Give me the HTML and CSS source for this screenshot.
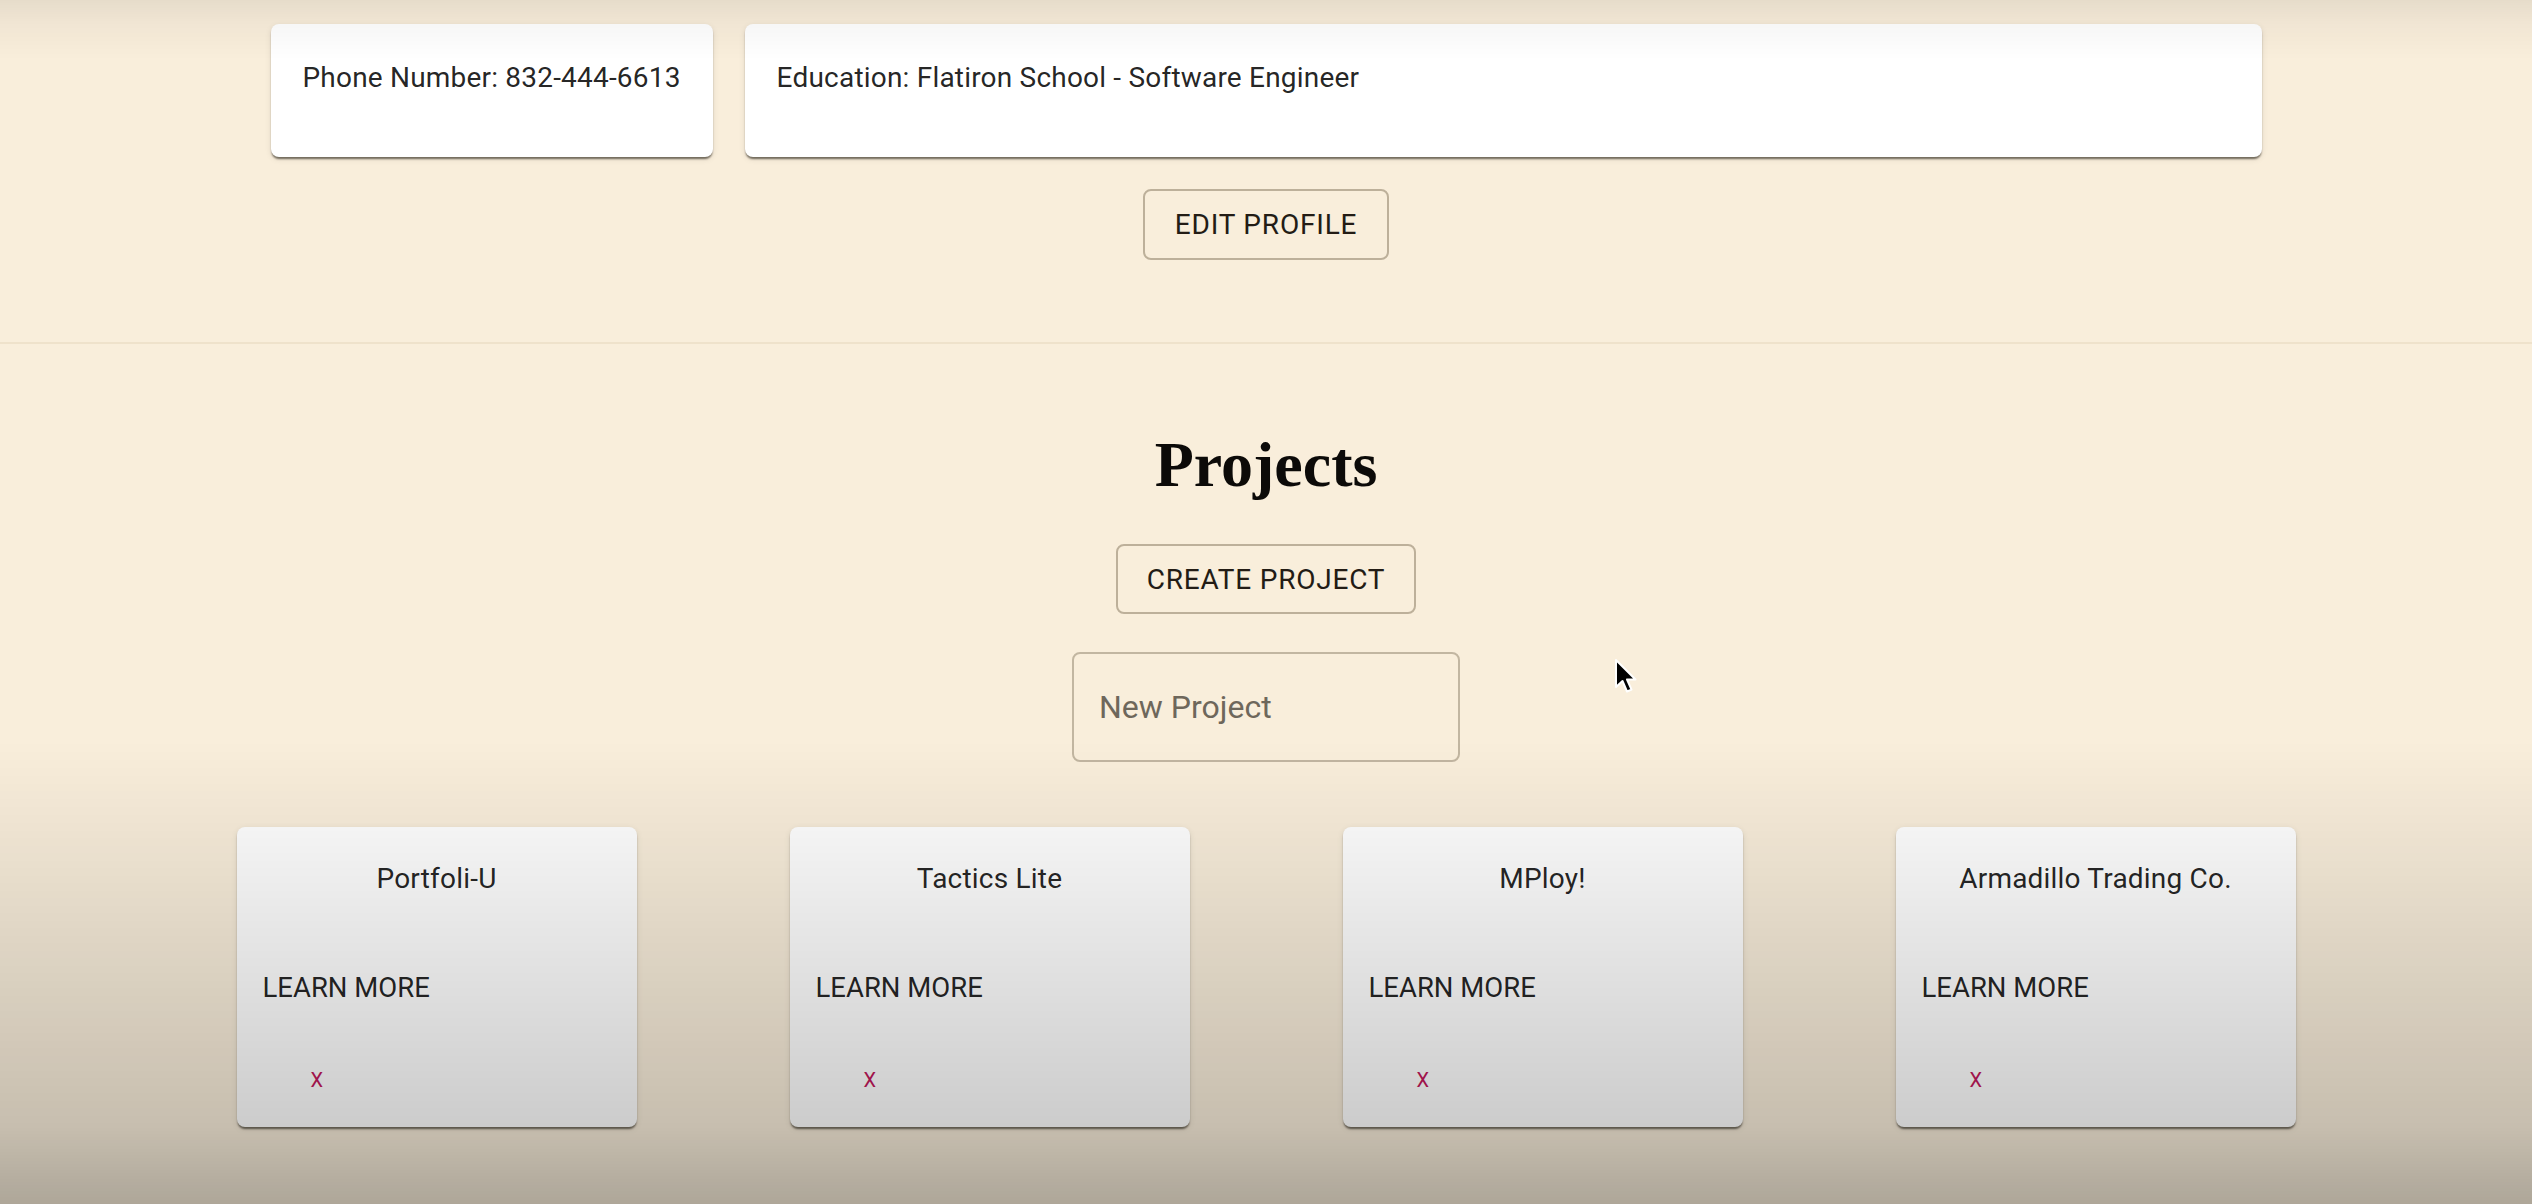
FILE: index.html
```html
<!DOCTYPE html>
<html lang="en">
<head>
<meta charset="utf-8">
<title>Profile - Projects</title>
<link rel="stylesheet" href="styles.css">
</head>
<body>
<main class="page">
  <section class="profile">
    <div class="info-row">
      <div class="info-card info-card--phone"><p class="info-text">Phone Number: 832-444-6613</p></div>
      <div class="info-card info-card--grow"><p class="info-text">Education: Flatiron School - Software Engineer</p></div>
    </div>
    <div class="center-row profile-actions">
      <button class="outline-btn" type="button">Edit Profile</button>
    </div>
  </section>

  <hr class="divider">

  <section class="projects">
    <h2 class="projects-title">Projects</h2>
    <div class="center-row create-row">
      <button class="outline-btn" type="button">Create Project</button>
    </div>
    <div class="center-row input-row">
      <input class="project-input" type="text" placeholder="New Project">
    </div>
    <div class="project-grid">
      <div class="project-card">
        <div class="project-name">Portfoli-U</div>
        <button class="learn-btn" type="button">Learn More</button>
        <button class="delete-btn" type="button">X</button>
      </div>
      <div class="project-card">
        <div class="project-name">Tactics Lite</div>
        <button class="learn-btn" type="button">Learn More</button>
        <button class="delete-btn" type="button">X</button>
      </div>
      <div class="project-card">
        <div class="project-name">MPloy!</div>
        <button class="learn-btn" type="button">Learn More</button>
        <button class="delete-btn" type="button">X</button>
      </div>
      <div class="project-card">
        <div class="project-name">Armadillo Trading Co.</div>
        <button class="learn-btn" type="button">Learn More</button>
        <button class="delete-btn" type="button">X</button>
      </div>
    </div>
  </section>
</main>

<div class="shade" aria-hidden="true"></div>

<svg class="cursor" width="24" height="36" viewBox="0 0 24 36" aria-hidden="true">
  <path d="M2 2 L2 29 L8.5 23 L13 33.5 L17.5 31.6 L13 21.5 L21.5 21.5 Z" fill="#000" stroke="#fff" stroke-width="2" stroke-linejoin="round"/>
</svg>
</body>
</html>
```

FILE: styles.css
```css
* {
  box-sizing: border-box;
}

html, body {
  margin: 0;
  padding: 0;
}

body {
  min-height: 1204px;
  background: #f9eedb;
  font-family: Roboto, "Liberation Sans", Arial, sans-serif;
  color: rgba(0, 0, 0, 0.87);
  overflow: hidden;
}

.page {
  min-height: 1204px;
}

.profile {
  padding-top: 24px;
}

.info-row {
  width: 1991px;
  margin: 0 auto;
  display: flex;
  gap: 32px;
}

.info-card {
  background: #ffffff;
  border-radius: 8px;
  padding: 34px 32px 59px 32px;
  box-shadow: 0 3px 2px -1px rgba(40, 35, 20, 0.55), 0 2px 2px 0 rgba(0, 0, 0, 0.12), 0 2px 6px 0 rgba(0, 0, 0, 0.1);
}

.info-card--grow {
  flex: 1;
}

.info-text {
  margin: 0;
  font-size: 28px;
  line-height: 40px;
  letter-spacing: 0.2px;
  white-space: nowrap;
}

.center-row {
  display: flex;
  justify-content: center;
}

.profile-actions {
  margin-top: 32px;
}

.outline-btn {
  height: 71px;
  padding: 0 30px;
  background: transparent;
  border: 2px solid #bdb09a;
  border-radius: 8px;
  font-family: Roboto, "Liberation Sans", Arial, sans-serif;
  font-size: 28px;
  font-weight: 400;
  letter-spacing: 0.8px;
  text-transform: uppercase;
  color: #231c15;
  cursor: pointer;
}

.divider {
  margin: 82px 0 0 0;
  border: 0;
  height: 2px;
  background: #efe2cb;
}

.projects-title {
  margin: 89px 0 0 0;
  text-align: center;
  font-family: "Liberation Serif", "Times New Roman", serif;
  font-weight: 700;
  font-size: 64px;
  line-height: 64px;
  color: #0c0a08;
}

.create-row {
  margin-top: 47px;
}

.create-row .outline-btn {
  height: 70px;
  width: 300px;
  padding: 0;
}

.input-row {
  margin-top: 38px;
}

.project-input {
  width: 388px;
  height: 110px;
  padding: 0 0 0 25px;
  background: transparent;
  border: 2px solid #c2b6a1;
  border-radius: 8px;
  font-family: Roboto, "Liberation Sans", Arial, sans-serif;
  font-size: 32px;
  color: #333;
  outline: none;
}

.project-input::placeholder {
  color: #6e675b;
  opacity: 1;
}

.project-grid {
  margin-top: 65px;
  display: flex;
  justify-content: center;
  gap: 153px;
}

.project-card {
  width: 400px;
  height: 300px;
  background: #ffffff;
  border-radius: 8px;
  padding: 31px 26px 0 26px;
  display: flex;
  flex-direction: column;
  align-items: flex-start;
  box-shadow: 0 3px 2px -1px rgba(40, 35, 20, 0.55), 0 2px 2px 0 rgba(0, 0, 0, 0.12), 0 2px 6px 0 rgba(0, 0, 0, 0.1);
}

.project-name {
  align-self: stretch;
  text-align: center;
  font-size: 28px;
  line-height: 42px;
  letter-spacing: 0.2px;
  color: rgba(0, 0, 0, 0.87);
}

.learn-btn {
  margin-top: 67px;
  padding: 0;
  background: none;
  border: 0;
  font-family: Roboto, "Liberation Sans", Arial, sans-serif;
  font-size: 27.5px;
  line-height: 42px;
  letter-spacing: 0;
  text-transform: uppercase;
  color: rgba(0, 0, 0, 0.87);
  cursor: pointer;
}

.delete-btn {
  margin-top: 56px;
  margin-left: 48px;
  padding: 0;
  background: none;
  border: 0;
  font-family: Roboto, "Liberation Sans", Arial, sans-serif;
  font-size: 20px;
  line-height: 30px;
  color: #c2185b;
  cursor: pointer;
}

.shade {
  position: fixed;
  inset: 0;
  pointer-events: none;
  background: linear-gradient(to bottom,
    rgba(0, 0, 0, 0.075) 0px,
    rgba(0, 0, 0, 0.035) 22px,
    rgba(0, 0, 0, 0) 60px,
    rgba(0, 0, 0, 0) 740px,
    rgba(0, 0, 0, 0.045) 827px,
    rgba(0, 0, 0, 0.2) 1127px,
    rgba(0, 0, 0, 0.3) 1204px);
}

.cursor {
  position: fixed;
  left: 1614px;
  top: 658px;
  pointer-events: none;
}
```
